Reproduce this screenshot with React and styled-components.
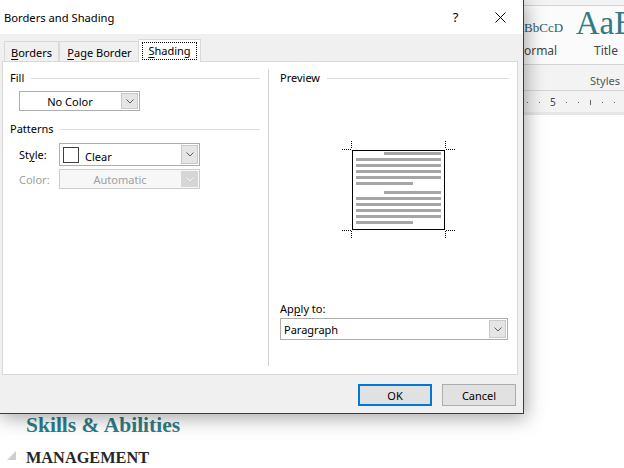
import React from 'react'
import styled, { createGlobalStyle } from 'styled-components'

const GlobalStyle = createGlobalStyle`
  html, body { margin: 0; padding: 0; }
  body {
    width: 624px;
    height: 468px;
    overflow: hidden;
    background: #ffffff;
    font-family: "Noto Sans", "Open Sans", sans-serif;
  }
`

// ---------- word window behind the dialog ----------
const Screen = styled.div`
  position: relative;
  width: 624px;
  height: 468px;
  overflow: hidden;
  display: flex;
  flex-direction: column;
`

const Ribbon = styled.div`
  height: 91px;
  background: #f3f3f3;
  border-bottom: 1px solid #d6d6d6;
  display: flex;
  flex-direction: column;
`

const Gallery = styled.div`
  margin-top: 5px;
  height: 58px;
  background: #fbfbfb;
  border-top: 1px solid #d4d4d4;
  border-bottom: 1px solid #d4d4d4;
  display: flex;
  justify-content: flex-end;
  margin-right: -17px;
`

const StyleCell = styled.div`
  width: 70px;
  display: flex;
  flex-direction: column;
  align-items: center;
  white-space: nowrap;
`

const StyleSample = styled.div`
  box-sizing: border-box;
  height: 38px;
  font-family: "Liberation Serif", serif;
  font-size: ${p => p.$size}px;
  line-height: ${p => p.$size}px;
  color: ${p => p.$color};
  padding-top: ${p => p.$pad}px;
`

const StyleName = styled.div`
  font-size: 12px;
  color: #444444;
  line-height: 14px;
`

const GroupLabel = styled.div`
  flex: 1;
  display: flex;
  align-items: flex-end;
  justify-content: flex-end;
  padding: 0 4px 2px 0;
  font-size: 11px;
  line-height: 14px;
  color: #555555;
`

const Ruler = styled.div`
  height: 20px;
  background: #f3f3f3;
  border-bottom: 3px solid #e6e6e6;
  display: flex;
  align-items: center;
  padding: 1px 0 0 526px;
  gap: 10px;
`

const RulerMark = styled.span`
  width: 2px;
  display: flex;
  justify-content: center;
  &::before {
    content: "";
    width: 1px;
    height: ${p => (p.$tall ? 5 : 1)}px;
    background: #666666;
  }
`

const RulerNum = styled.span`
  font-size: 10px;
  color: #444444;
  line-height: 10px;
`

const Document = styled.div`
  flex: 1;
  background: #ffffff;
  padding: 298px 0 0 26px;
  position: relative;
`

const Heading = styled.div`
  font-family: "Liberation Serif", serif;
  font-weight: bold;
  font-size: 21.5px;
  line-height: 24px;
  color: #2f7c87;
`

const SubHeading = styled.div`
  margin-top: 11px;
  font-family: "Liberation Serif", serif;
  font-weight: bold;
  font-size: 16.3px;
  line-height: 20px;
  color: #262626;
`

const Collapse = styled.span`
  position: absolute;
  left: 7px;
  top: 336px;
  width: 0;
  height: 0;
  border-left: 9px solid transparent;
  border-bottom: 9px solid #cfcfcf;
`

// ---------- dialog ----------
const Dialog = styled.div`
  position: absolute;
  left: -1px;
  top: -1px;
  width: 525px;
  height: 415px;
  box-sizing: border-box;
  border: 1px solid #3c3c3c;
  background: #f0f0f0;
  box-shadow: 2px 4px 18px rgba(0, 0, 0, 0.35);
  display: flex;
  flex-direction: column;
  font-size: 11px;
  color: #000000;
`

const TitleBar = styled.div`
  height: 34px;
  background: #ffffff;
  display: flex;
  align-items: center;
  padding-left: 4px;
`

const TitleText = styled.div`
  flex: 1;
  font-size: 11.2px;
`

const TitleButton = styled.div`
  width: 45px;
  height: 34px;
  display: flex;
  align-items: center;
  justify-content: center;
  font-size: 13px;
`

const Body = styled.div`
  flex: 1;
  padding: 5px 0 0 2px;
  display: flex;
  flex-direction: column;
`

const TabRow = styled.div`
  height: 22px;
  display: flex;
  align-items: flex-end;
  padding-left: 2px;
  position: relative;
  z-index: 1;
`

const Tab = styled.div`
  box-sizing: border-box;
  width: ${p => p.$w}px;
  height: ${p => (p.$active ? 23 : 20)}px;
  margin-bottom: ${p => (p.$active ? -1 : 0)}px;
  margin-left: ${p => (p.$active ? -1 : 0)}px;
  border: 1px solid #d9d9d9;
  border-bottom: none;
  border-right: ${p => (p.$last ? 'none' : '1px solid #d9d9d9')};
  background: ${p => (p.$active ? '#ffffff' : '#f0f0f0')};
  display: flex;
  align-items: center;
  justify-content: center;
  padding-top: ${p => (p.$active ? 0 : 1)}px;
  white-space: nowrap;
`

const Focus = styled.span`
  border: 1px dotted #000000;
  padding: 0 5px;
  line-height: 16px;
`

const Key = styled.span`
  text-decoration: underline;
  text-underline-offset: 2px;
`

const Panel = styled.div`
  box-sizing: border-box;
  width: 516px;
  height: 314px;
  border: 1px solid #d9d9d9;
  background: #ffffff;
  display: flex;
`

const LeftCol = styled.div`
  width: 265px;
  box-sizing: border-box;
  padding: 0 8px 0 7px;
  display: flex;
  flex-direction: column;
`

const Divider = styled.div`
  width: 1px;
  margin: 7px 0 8px;
  background: #d2d2d2;
`

const RightCol = styled.div`
  flex: 1;
  padding: 0 8px 0 11px;
  display: flex;
  flex-direction: column;
`

const GroupHeader = styled.div`
  margin-top: ${p => p.$top}px;
  height: 14px;
  display: flex;
  align-items: center;
  gap: 7px;
  line-height: 14px;
  &::after {
    content: "";
    flex: 1;
    height: 1px;
    background: #dcdcdc;
  }
`

const FieldRow = styled.div`
  margin-top: ${p => p.$top}px;
  padding-left: 9px;
  display: flex;
  align-items: center;
`

const FieldLabel = styled.div`
  width: 40px;
  color: ${p => (p.$disabled ? '#a0a0a0' : '#000000')};
`

const Combo = styled.div`
  box-sizing: border-box;
  width: ${p => p.$w}px;
  height: ${p => p.$h}px;
  border: 1px solid ${p => (p.$disabled ? '#cccccc' : '#adadad')};
  background: ${p => (p.$disabled ? '#f7f7f7' : '#ffffff')};
  display: flex;
  align-items: stretch;
`

const ComboValue = styled.div`
  flex: 1;
  display: flex;
  align-items: center;
  gap: 6px;
  padding-left: ${p => (p.$center ? 0 : 3)}px;
  justify-content: ${p => (p.$center ? 'center' : 'flex-start')};
  color: ${p => (p.$disabled ? '#a0a0a0' : '#000000')};
`

const Swatch = styled.span`
  width: 16px;
  height: 16px;
  box-sizing: border-box;
  border: 1px solid #404040;
  background: #ffffff;
`

const ClearText = styled.span`
  padding-top: 3px;
`

const ArrowBox = styled.div`
  width: 17px;
  margin: 1px;
  background: ${p => (p.$disabled ? '#d6d6d6' : '#e5e5e5')};
  border: 1px solid ${p => (p.$disabled ? '#d6d6d6' : '#c9c9c9')};
  box-sizing: border-box;
  display: flex;
  align-items: center;
  justify-content: center;
`

const ApplyLabel = styled.div`
  margin-top: 62px;
  line-height: 14px;
`

const ApplyCombo = styled.div`
  margin-top: 2px;
`

const PreviewArt = styled.svg`
  margin: 53px 0 0 62px;
  display: block;
`

const Footer = styled.div`
  display: flex;
  justify-content: flex-end;
  gap: 10px;
  padding: 9px 7px 0 0;
`

const Button = styled.div`
  box-sizing: border-box;
  width: 74px;
  height: 22px;
  background: #e1e1e1;
  border: ${p => (p.$primary ? '2px solid #0078d7' : '1px solid #adadad')};
  display: flex;
  align-items: center;
  justify-content: center;
`

function Chevron({ disabled }) {
  return (
    <svg width="8" height="5" viewBox="0 0 8 5">
      <polyline points="0.5,0.5 4,4 7.5,0.5" fill="none" stroke={disabled ? '#f2f2f2' : '#5a5a5a'} strokeWidth="1" />
    </svg>
  )
}

function Dropdown({ w, h, disabled, center, children }) {
  return (
    <Combo $w={w} $h={h} $disabled={disabled}>
      <ComboValue $center={center} $disabled={disabled}>{children}</ComboValue>
      <ArrowBox $disabled={disabled}><Chevron disabled={disabled} /></ArrowBox>
    </Combo>
  )
}

const bars = [
  [42, 14, 57], [14, 20, 85], [14, 26, 85], [14, 32, 85], [14, 38, 85], [14, 44, 57],
  [42, 53, 57], [14, 59, 85], [14, 65, 85], [14, 71, 85], [14, 77, 85], [14, 83, 57],
]

function Preview() {
  const dot = { stroke: '#000', strokeWidth: 1, strokeDasharray: '1 1', fill: 'none' }
  return (
    <PreviewArt width="113" height="102" viewBox="0 0 113 102">
      <rect x="10.5" y="12.5" width="92" height="79" fill="#fff" stroke="#000" strokeWidth="1" />
      {bars.map(([x, y, w], i) => (
        <rect key={i} x={x} y={y} width={w} height="3" fill="#a6a6a6" />
      ))}
      <line x1="0" y1="11.5" x2="9" y2="11.5" {...dot} />
      <line x1="9.5" y1="3" x2="9.5" y2="11" {...dot} />
      <line x1="104" y1="11.5" x2="113" y2="11.5" {...dot} />
      <line x1="103.5" y1="3" x2="103.5" y2="11" {...dot} />
      <line x1="0" y1="92.5" x2="9" y2="92.5" {...dot} />
      <line x1="9.5" y1="93" x2="9.5" y2="101" {...dot} />
      <line x1="104" y1="92.5" x2="113" y2="92.5" {...dot} />
      <line x1="103.5" y1="93" x2="103.5" y2="101" {...dot} />
    </PreviewArt>
  )
}

function CloseIcon() {
  return (
    <svg width="11" height="11" viewBox="0 0 11 11">
      <path d="M0.5 0.5 L10.5 10.5 M10.5 0.5 L0.5 10.5" stroke="#000" strokeWidth="1" />
    </svg>
  )
}

export default function App() {
  return (
    <Screen>
      <GlobalStyle />
      <Ribbon>
        <Gallery>
          <StyleCell>
            <StyleSample $size={13} $color="#2a5a6e" $pad={15}>AaBbCcD</StyleSample>
            <StyleName>Normal</StyleName>
          </StyleCell>
          <StyleCell>
            <StyleSample $size={33} $color="#2f7c87" $pad={1}>AaB</StyleSample>
            <StyleName>Title</StyleName>
          </StyleCell>
        </Gallery>
        <GroupLabel>Styles</GroupLabel>
      </Ribbon>
      <Ruler>
        <RulerMark /><RulerMark /><RulerNum>5</RulerNum><RulerMark /><RulerMark /><RulerMark $tall /><RulerMark /><RulerMark />
      </Ruler>
      <Document>
        <Heading>Skills &amp; Abilities</Heading>
        <SubHeading>MANAGEMENT</SubHeading>
        <Collapse />
      </Document>

      <Dialog>
        <TitleBar>
          <TitleText>Borders and Shading</TitleText>
          <TitleButton>?</TitleButton>
          <TitleButton><CloseIcon /></TitleButton>
        </TitleBar>
        <Body>
          <TabRow>
            <Tab $w={55}><Key>B</Key>orders</Tab>
            <Tab $w={80} $last><Key>P</Key>age Border</Tab>
            <Tab $w={63} $active><Focus><Key>S</Key>hading</Focus></Tab>
          </TabRow>
          <Panel>
            <LeftCol>
              <GroupHeader $top={9}>Fill</GroupHeader>
              <FieldRow $top={6}>
                <Dropdown w={121} h={20} center>No Color</Dropdown>
              </FieldRow>
              <GroupHeader $top={11}>Patterns</GroupHeader>
              <FieldRow $top={7}>
                <FieldLabel>St<Key>y</Key>le:</FieldLabel>
                <Dropdown w={141} h={23}>
                  <Swatch /><ClearText>Clear</ClearText>
                </Dropdown>
              </FieldRow>
              <FieldRow $top={3}>
                <FieldLabel $disabled>Color:</FieldLabel>
                <Dropdown w={141} h={20} center disabled>Automatic</Dropdown>
              </FieldRow>
            </LeftCol>
            <Divider />
            <RightCol>
              <GroupHeader $top={9}>Preview</GroupHeader>
              <Preview />
              <ApplyLabel>Ap<Key>p</Key>ly to:</ApplyLabel>
              <ApplyCombo>
                <Dropdown w={228} h={22}>Paragraph</Dropdown>
              </ApplyCombo>
            </RightCol>
          </Panel>
          <Footer>
            <Button $primary>OK</Button>
            <Button>Cancel</Button>
          </Footer>
        </Body>
      </Dialog>
    </Screen>
  )
}
